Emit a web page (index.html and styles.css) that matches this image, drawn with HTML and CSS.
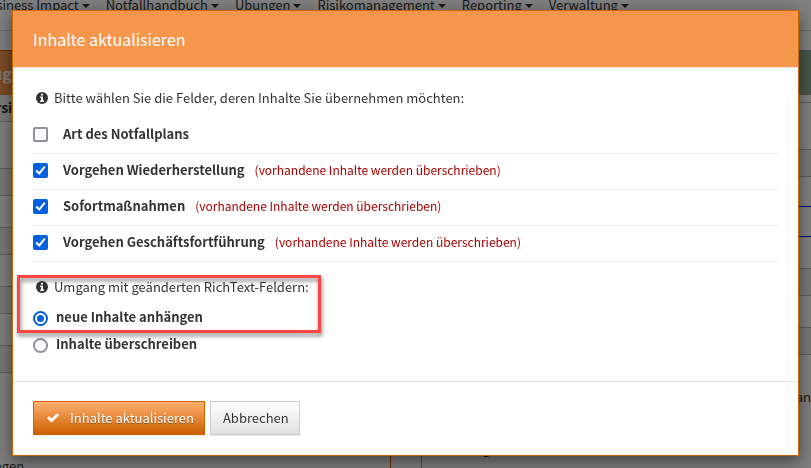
FILE: index.html
```html
<!DOCTYPE html>
<html lang="de">
<head>
  <meta charset="UTF-8">
  <meta name="viewport" content="width=device-width, initial-scale=1.0">
  <title>Inhalte aktualisieren</title>
  <link rel="stylesheet" href="styles.css">
</head>
<body>
  <div class="page">
    <nav class="menu">
      <a href="#">Business Impact<span class="caret"></span></a>
      <a href="#">Notfallhandbuch<span class="caret"></span></a>
      <a href="#">Übungen<span class="caret"></span></a>
      <a href="#">Risikomanagement<span class="caret"></span></a>
      <a href="#">Reporting<span class="caret"></span></a>
      <a href="#">Verwaltung<span class="caret"></span></a>
    </nav>

    <div class="columns">
      <section class="panel">
        <h2>ug</h2>
        <div class="line head">ersi</div>
        <div class="line tall"></div>
        <div class="line shade"></div>
        <div class="line"></div>
        <div class="line shade"></div>
        <div class="line"></div>
        <div class="line shade"></div>
        <div class="line"></div>
        <div class="line shade"></div>
        <div class="note">ungen</div>
      </section>
      <section class="panel green">
        <h2></h2>
        <div class="line thin"></div>
        <div class="line tall"></div>
        <div class="line shade"></div>
        <div class="line blue"></div>
        <div class="line blue"></div>
        <div class="line"></div>
        <div class="line shade"></div>
        <div class="line"></div>
        <div class="line shade"></div>
        <div class="note end">an</div>
        <div class="note low">Auslösung</div>
      </section>
    </div>
  </div>

  <div class="backdrop"></div>

  <form class="modal" role="dialog" aria-labelledby="modal-title">
    <div class="modal-header">
      <h1 id="modal-title">Inhalte aktualisieren</h1>
    </div>

    <div class="modal-body">
      <p class="hint">
        <svg class="icon" viewBox="0 0 12 12"><circle cx="6" cy="6" r="6" fill="#333"/><path d="M5 1.8h2v1.7H5zM4.2 4.6H7v3.9h1v1.4H4.2V8.5h.9V6h-.9z" fill="#fff"/></svg>
        Bitte wählen Sie die Felder, deren Inhalte Sie übernehmen möchten:
      </p>
      <div class="fields">
        <div class="field">
          <input type="checkbox" id="art">
          <label for="art">Art des Notfallplans</label>
        </div>
        <div class="field">
          <input type="checkbox" id="wieder" checked>
          <label for="wieder">Vorgehen Wiederherstellung</label>
          <span class="warning">(vorhandene Inhalte werden überschrieben)</span>
        </div>
        <div class="field">
          <input type="checkbox" id="sofort" checked>
          <label for="sofort">Sofortmaßnahmen</label>
          <span class="warning">(vorhandene Inhalte werden überschrieben)</span>
        </div>
        <div class="field">
          <input type="checkbox" id="fortf" checked>
          <label for="fortf">Vorgehen Geschäftsfortführung</label>
          <span class="warning">(vorhandene Inhalte werden überschrieben)</span>
        </div>
      </div>

      <div class="marked">
        <p class="hint">
          <svg class="icon" viewBox="0 0 12 12"><circle cx="6" cy="6" r="6" fill="#333"/><path d="M5 1.8h2v1.7H5zM4.2 4.6H7v3.9h1v1.4H4.2V8.5h.9V6h-.9z" fill="#fff"/></svg>
          Umgang mit geänderten RichText-Feldern:
        </p>
        <div class="option">
          <input type="radio" name="modus" id="anhaengen" checked>
          <label for="anhaengen">neue Inhalte anhängen</label>
        </div>
      </div>
      <div class="option">
        <input type="radio" name="modus" id="ersetzen">
        <label for="ersetzen">Inhalte überschreiben</label>
      </div>
    </div>

    <div class="modal-footer">
      <button type="submit" class="btn btn-primary">
        <svg class="check" viewBox="0 0 14 12"><path d="M1 6.2 3.1 4.2 5.6 6.6 11 1.2 13 3.2 5.6 10.6z" fill="#fff"/></svg>
        Inhalte aktualisieren
      </button>
      <button type="button" class="btn">Abbrechen</button>
    </div>
  </form>
</body>
</html>
```
FILE: styles.css
```css
* {
  box-sizing: border-box;
}
body {
  margin: 0;
  font-family: "Noto Sans CJK SC", "Open Sans", sans-serif;
  font-size: 13px;
  line-height: 20px;
  color: #333;
  background: #fff;
}
h1, h2, p {
  margin: 0;
}

/* page behind the dialog */
.page {
  display: flex;
  flex-direction: column;
  height: 100vh;
  overflow: hidden;
}
.menu {
  display: flex;
  gap: 16px;
  margin-top: -5px;
  margin-left: -20px;
  padding-bottom: 15px;
  border-bottom: 1px solid #ddd;
}
.menu a {
  color: #333;
  text-decoration: none;
  white-space: nowrap;
}
.caret {
  display: inline-block;
  margin-left: 3px;
  vertical-align: middle;
  border-top: 4px solid #333;
  border-left: 4px solid transparent;
  border-right: 4px solid transparent;
}
.columns {
  display: grid;
  flex: 1;
  grid-template-columns: 391fr 390fr;
  gap: 30px;
  margin-top: 19px;
}
.panel {
  border-right: 1px solid #c60;
}
.panel h2 {
  height: 45px;
  padding-top: 12px;
  border-top: 1px solid #c60;
  background: #f6964d;
  color: #fff;
  font-size: 16px;
  margin-left: -8px;
}
.panel.green {
  border-right: 0;
  border-left: 1px solid #8fac97;
}
.green h2 {
  border-color: #8fac97;
  background: #8fac97;
  margin-left: 0;
}
.line {
  height: 32px;
  border-bottom: 1px solid #bbb;
}
.line.tall {
  height: 47px;
}
.line.shade {
  height: 27px;
  background: #eee;
}
.line.thin {
  height: 8px;
}
.line.head {
  height: 27px;
  padding-top: 2px;
  margin-left: -13px;
  background: #f5f5f5;
  font-size: 14px;
  font-weight: bold;
}
.line.blue {
  height: 30px;
  border-bottom: 1px solid #00f;
}
.note {
  margin-top: 83px;
  margin-left: -14px;
}
.note.end {
  margin-top: 32px;
  text-align: right;
}
.note.low {
  margin-top: 32px;
  margin-left: 5px;
}

.backdrop {
  position: fixed;
  inset: 0;
  background: rgba(0, 0, 0, 0.5);
}

/* dialog */
.modal {
  position: absolute;
  top: 10px;
  left: 12px;
  right: 12px;
  background: #fff;
  border: 1px solid #c60;
  box-shadow: 0 5px 15px rgba(0, 0, 0, 0.5);
}
.modal-header {
  padding: 18px 20px;
  background: #f6964d;
  border-bottom: 1px solid #e5e5e5;
}
.modal-header h1 {
  font-size: 16px;
  font-weight: normal;
  color: #fff;
}
.modal-body {
  padding: 20px 20px 24px;
}
.hint {
  display: flex;
  align-items: center;
  gap: 6px;
  padding-left: 3px;
}
.icon {
  width: 12px;
  height: 12px;
}
.fields {
  margin: 10px 0 15px;
}
.field {
  display: flex;
  align-items: center;
  height: 36px;
  padding-bottom: 4px;
  border-bottom: 1px solid #eee;
}
.field label, .option label {
  font-weight: bold;
}
.field label {
  margin-left: 15px;
}
.option label {
  margin-left: 8px;
}
.warning {
  margin-left: 10px;
  font-size: 12px;
  color: #a00;
}
.option {
  display: flex;
  align-items: center;
  height: 27px;
}
input {
  appearance: none;
  width: 15px;
  height: 15px;
  margin: 2px 0 0;
  border: 2px solid #8f8f9d;
  border-radius: 2px;
  background: #fff;
}
input:checked {
  border-color: #0060df;
}
input[type="checkbox"]:checked {
  background: #0060df;
}
input[type="checkbox"]:checked::before {
  content: "";
  display: block;
  width: 11px;
  height: 11px;
  background: #fff;
  clip-path: polygon(4% 56%, 18% 44%, 38% 64%, 82% 8%, 96% 20%, 40% 90%);
}
input[type="radio"] {
  margin-top: 4px;
  border-radius: 50%;
}
input[type="radio"]:checked::before {
  content: "";
  display: block;
  width: 7px;
  height: 7px;
  margin: 2px;
  border-radius: 50%;
  background: #0060df;
}
.marked {
  position: relative;
  width: fit-content;
}
.marked .option {
  margin-top: 6px;
}
/* red frame round the group */
.marked::after {
  content: "";
  position: absolute;
  inset: -2px -12px -3px -16px;
  border: 3px solid #f44;
  filter: drop-shadow(1px 3px 2px rgba(0, 0, 0, 0.5));
  pointer-events: none;
}

.modal-footer {
  display: flex;
  gap: 5px;
  padding: 19px 20px 20px;
  border-top: 1px solid #e5e5e5;
}
.btn {
  display: flex;
  align-items: center;
  height: 34px;
  padding: 0 10px 0 12px;
  font: inherit;
  color: #333;
  text-shadow: 0 1px 1px #fff;
  border: 1px solid #ccc;
  background: linear-gradient(#fff, #e0e0e0);
  box-shadow: 0 1px 1px rgba(0, 0, 0, 0.08);
}
.btn-primary {
  gap: 10px;
  color: #fff;
  text-shadow: 0 1px 1px rgba(0, 0, 0, 0.4);
  border-color: #c60;
  background: linear-gradient(#ffaf70, #cc6100);
}
.check {
  width: 14px;
  height: 12px;
}
```
